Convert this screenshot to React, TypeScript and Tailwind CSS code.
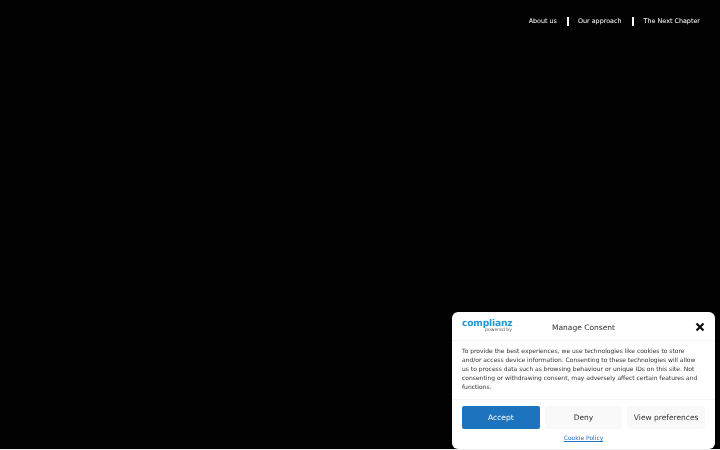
const F = "font-['DejaVu_Sans',sans-serif] [text-rendering:geometricPrecision]";
export default function App() {
  return (
    <div className={`relative w-[720px] h-[450px] bg-[#eeeeee] overflow-hidden ${F}`}>
      <div className="h-[449px] bg-[#020202] flex flex-col">
        <nav className="flex justify-end items-center h-[42px] pt-[1px] pr-5 text-[6.4px] text-white [will-change:opacity]">
          <span className="pr-[10.5px]">About us</span>
          <span className="pl-[8.5px] pr-[10px] border-l-2 border-white leading-[9px]">Our approach</span>
          <span className="pl-[10px] border-l-2 border-white leading-[9px]">The Next Chapter</span>
        </nav>
      </div>
      <div className="absolute left-[452px] top-[312px] w-[263px] h-[137px] bg-white rounded-[6px] flex flex-col">
        <div className="h-[29px] relative flex items-center justify-center border-b border-[#f5f5f5] text-[7.5px] text-[#333]">
          <div className="absolute left-[10px] top-[7px] w-[50px] [will-change:opacity]">
            <div className="text-[9.2px] font-bold text-[#1e9bd7] leading-[10px] tracking-[-0.2px] whitespace-nowrap">complianz</div>
            <div className="text-right text-[4.6px] leading-[4px] text-[#555]">powered by</div>
          </div>
          <span className="pt-[3px] [will-change:opacity]">Manage Consent</span>
          <svg className="absolute right-[10px] top-[10px]" width="10" height="10" viewBox="0 0 10 10"><path d="M1.5 1.5L8.5 8.5M8.5 1.5L1.5 8.5" stroke="#111" strokeWidth="2.2"/></svg>
        </div>
        <div className="h-[59px] border-b border-[#f5f5f5]">
          <div className="pl-[10px] pr-[14px] pt-[6px] text-[6px] leading-[9px] text-[#333] [will-change:opacity]">To provide the best experiences, we use technologies like cookies to store and/or access device information. Consenting to these technologies will allow us to process data such as browsing behaviour or unique IDs on this site. Not consenting or withdrawing consent, may adversely affect certain features and functions.</div>
        </div>
        <div className="flex gap-[5px] px-[10px] pt-[6px] text-[7.5px]">
          <div className="w-[78px] h-[23px] rounded-[2px] bg-[#1e73be] flex items-center justify-center"><span className="text-white [will-change:opacity]">Accept</span></div>
          <div className="w-[78px] h-[23px] rounded-[2px] bg-[#f9f9f9] flex items-center justify-center"><span className="text-[#333] [will-change:opacity]">Deny</span></div>
          <div className="w-[78px] h-[23px] rounded-[2px] bg-[#f9f9f9] flex items-center justify-center"><span className="text-[#333] [will-change:opacity]">View preferences</span></div>
        </div>
        <div className="text-center text-[6px] mt-[6px] leading-[8px] text-[#1e73be] underline [will-change:opacity]">Cookie Policy</div>
      </div>
    </div>
  );
}
